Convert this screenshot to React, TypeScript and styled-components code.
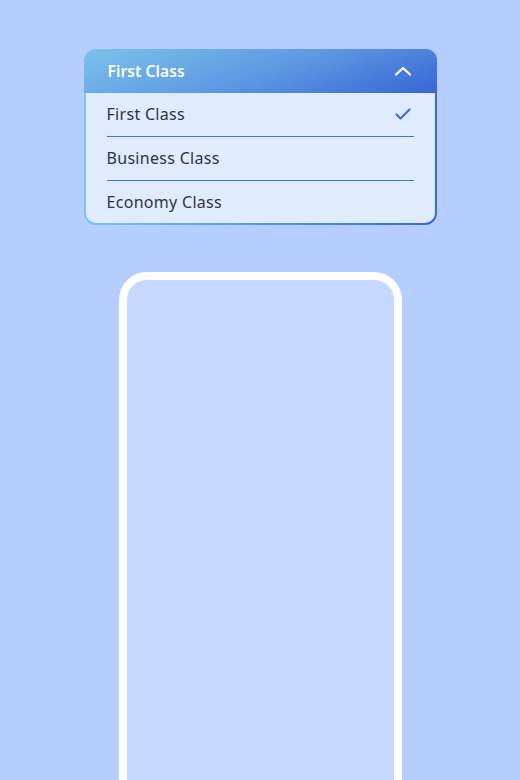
import React from "react";
import styled, { createGlobalStyle } from "styled-components";

const Global = createGlobalStyle`
  html, body { margin: 0; padding: 0; background: #b6cefd; overflow: hidden; }
  body { font-family: "Noto Sans", "Open Sans", sans-serif; }
`;

const Page = styled.div`
  width: 520px;
  height: 780px;
  display: flex;
  flex-direction: column;
  align-items: center;
  padding-top: 49px;
  box-sizing: border-box;
  gap: 47px;
  overflow: hidden;
`;

const Dropdown = styled.div`
  width: 353px;
  flex-shrink: 0;
  border-radius: 12px;
  overflow: hidden;
  background: linear-gradient(90deg, #7cc6ec 0%, #5a95e0 50%, #3a68d6 100%);
  display: flex;
  flex-direction: column;
`;

const Header = styled.div`
  height: 44px;
  display: flex;
  align-items: center;
  justify-content: space-between;
  padding: 0 25px 0 24px;
  background: linear-gradient(160deg, #7cc2ec 0%, #5b95e2 55%, #3866d4 100%);
  color: #ffffff;
  font-weight: 600;
  font-size: 15.5px;
  letter-spacing: 0.1px;
`;

const List = styled.ul`
  list-style: none;
  margin: 0 2px 2px;
  padding: 0 21px;
  background: #e0ebfd;
  border-radius: 0 0 10px 10px;
`;

const Item = styled.li<{ $last?: boolean }>`
  height: ${(p) => (p.$last ? "42px" : "44px")};
  display: flex;
  align-items: center;
  justify-content: space-between;
  font-size: 16px;
  letter-spacing: 0.3px;
  color: #2e3440;
  border-bottom: ${(p) => (p.$last ? "none" : "1px solid #4472d6")};
  box-sizing: border-box;
  padding-bottom: ${(p) => (p.$last ? "0" : "1px")};
`;

const CheckWrap = styled.span`
  display: flex;
  margin-right: 3px;
`;

const Phone = styled.div`
  width: 283px;
  height: 560px;
  flex-shrink: 0;
  box-sizing: border-box;
  border: 8px solid #ffffff;
  border-radius: 28px;
  background: #c5d8ff;
`;

const Chevron = () => (
  <svg width="18" height="12" viewBox="0 0 18 12" fill="none">
    <path d="M2 9.5 L9 3 L16 9.5" stroke="#fff" strokeWidth="2.2" strokeLinecap="round" strokeLinejoin="round" />
  </svg>
);

const Check = () => (
  <svg width="16" height="12" viewBox="0 0 16 12" fill="none">
    <path d="M1.5 6.5 L5.5 10.5 L14.5 1.5" stroke="#3e6fd4" strokeWidth="2.2" strokeLinecap="round" strokeLinejoin="round" />
  </svg>
);

export default function App() {
  const options = ["First Class", "Business Class", "Economy Class"];
  return (
    <>
      <Global />
      <Page>
        <Dropdown>
          <Header>
            <span>First Class</span>
            <Chevron />
          </Header>
          <List>
            {options.map((o, i) => (
              <Item key={o} $last={i === options.length - 1}>
                <span>{o}</span>
                {i === 0 && (
                  <CheckWrap>
                    <Check />
                  </CheckWrap>
                )}
              </Item>
            ))}
          </List>
        </Dropdown>
        <Phone />
      </Page>
    </>
  );
}
